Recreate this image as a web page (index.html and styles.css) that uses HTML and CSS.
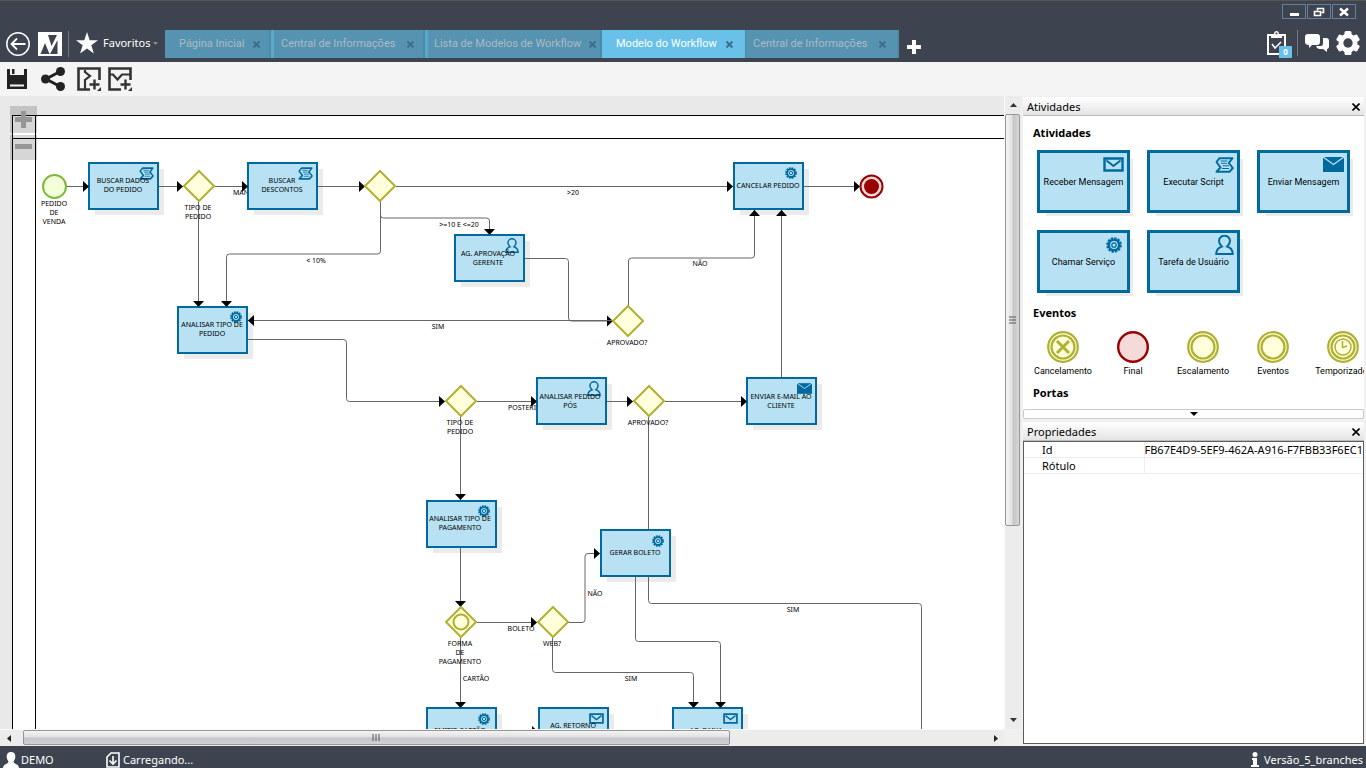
FILE: index.html
```html
<!DOCTYPE html>
<html lang="pt-BR">
<head>
<meta charset="utf-8">
<title>Modelo do Workflow</title>
<link rel="stylesheet" href="styles.css">
</head>
<body>
<svg class="defs" aria-hidden="true">
  <defs>
    <symbol id="i-mail" viewBox="0 0 21 15"><path d="M1.500 1.500h18v12h-18z" fill="none" stroke="#006a9e" stroke-width="2.400"/><path d="M3.500 3.500l7 5.500 7-5.500" fill="none" stroke="#006a9e" stroke-width="2"/></symbol>
    <symbol id="i-mail-full" viewBox="0 0 21 15"><path d="M0 0h21v15H0z" fill="#006a9e"/><path d="M0 0l10.500 7.500L21 0" fill="none" stroke="#b8e2f4" stroke-width="1.300"/></symbol>
    <symbol id="i-script" viewBox="0 0 19 16"><path d="M4.500 1.200H17.500L13.800 6 17.800 11 14.500 14.800H1.500L5.500 10.500 1.500 5z" fill="none" stroke="#006a9e" stroke-width="2" stroke-linejoin="round"/><path d="M5.500 4h7M6 6.300h6M7.500 8.800h6.500M7 11.500h7" stroke="#006a9e" stroke-width="1"/></symbol>
    <symbol id="i-gear" viewBox="0 0 16 16"><circle cx="8" cy="8" r="6.800" fill="none" stroke="#006a9e" stroke-width="2" stroke-dasharray="2.400 1.160"/><circle cx="8" cy="8" r="5.200" fill="none" stroke="#006a9e" stroke-width="2.600"/><circle cx="8" cy="8" r="2.200" fill="none" stroke="#006a9e" stroke-width="1.300"/></symbol>
    <symbol id="i-user" viewBox="0 0 19 21"><path d="M6.800 11.500C4.500 9.500 4 7.500 4 5.800a5.500 5 0 0 1 11 0c0 1.700-.5 3.700-2.800 5.700 3.300 1 5.300 2.500 5.600 7.500H1.200c.3-5 2.300-6.500 5.600-7.500z" fill="none" stroke="#006a9e" stroke-width="2"/></symbol>
    <symbol id="i-event" viewBox="0 0 32 32"><circle cx="16" cy="16" r="14.800" fill="#ffffdb" stroke="#b0b033" stroke-width="2.200"/><circle cx="16" cy="16" r="11.500" fill="#ffffdb" stroke="#b0b033" stroke-width="2.200"/></symbol>
  </defs>
</svg>

<div class="app">
  <header class="top">
    <div class="window-bar">
      <button class="win" aria-label="Minimizar"><svg width="12" height="10"><path d="M2 6h9v3H2z" fill="#fff"/></svg></button>
      <button class="win" aria-label="Restaurar"><svg width="12" height="10"><path d="M4.500 3.500V1.500h6v4H8.500M1.500 4.500h6v4h-6z" fill="none" stroke="#fff" stroke-width="1.600"/></svg></button>
      <button class="win" aria-label="Fechar"><svg width="12" height="10"><path d="M2 1.500l8 7M10 1.500l-8 7" stroke="#fff" stroke-width="2.400"/></svg></button>
    </div>
    <div class="nav">
      <button class="icon-btn" aria-label="Voltar"><svg width="24" height="24"><circle cx="12" cy="12" r="11.200" fill="none" stroke="#fff" stroke-width="1.500"/><path d="M19.500 12H5.500M11 6.500L5.500 12l5.500 5.500" fill="none" stroke="#fff" stroke-width="1.800"/></svg></button>
      <button class="icon-btn logo" aria-label="Início"><svg width="24" height="24"><path d="M0 0h24v24H0z" fill="#fff"/><path d="M2.500 22L7 11l4.500 11zM10 3h9l-5.500 11zM12 22l7.500-14v14z" fill="#3d434f"/></svg></button>
      <span class="rule"></span>
      <button class="fav"><svg width="24" height="24" viewBox="0 0 24 24"><path d="M12 1l2.700 8.200H23l-6.700 5 2.600 8.300L12 17.400l-6.900 5.100 2.600-8.300-6.700-5h8.300z" fill="#fff"/></svg>Favoritos<svg class="caret" width="5" height="3"><path d="M0 0h5L2.500 3z" fill="#8a8d92"/></svg></button>
      <nav class="tabs">
        <button class="tab t1">Página Inicial<svg class="x" width="7" height="7"><path d="M0.500 0.500l6 6M6.500 0.500l-6 6"/></svg></button>
        <button class="tab t2">Central de Informações<svg class="x" width="7" height="7"><path d="M0.500 0.500l6 6M6.500 0.500l-6 6"/></svg></button>
        <button class="tab t3">Lista de Modelos de Workflow<svg class="x" width="7" height="7"><path d="M0.500 0.500l6 6M6.500 0.500l-6 6"/></svg></button>
        <button class="tab t4 active">Modelo do Workflow<svg class="x" width="7" height="7"><path d="M0.500 0.500l6 6M6.500 0.500l-6 6"/></svg></button>
        <button class="tab t2 last">Central de Informações<svg class="x" width="7" height="7"><path d="M0.500 0.500l6 6M6.500 0.500l-6 6"/></svg></button>
      </nav>
      <button class="icon-btn plus" aria-label="Nova aba"><svg width="14" height="14"><path d="M5 0h4v5h5v4H9v5H5V9H0V5h5z" fill="#fff"/></svg></button>
      <div class="tools">
        <button class="icon-btn clip" aria-label="Tarefas"><svg width="19" height="24"><path d="M1 4h17v19H1z" fill="none" stroke="#fff" stroke-width="2"/><path d="M4 3h3c0-4 5-4 5 0h3v4H4z" fill="#fff"/><circle cx="9.500" cy="2.500" r="1" fill="#3d434f"/><path d="M5 13l3 4 6-6" fill="none" stroke="#fff" stroke-width="1.500"/></svg><span class="badge">0</span></button>
        <span class="rule"></span>
        <button class="icon-btn" aria-label="Mensagens"><svg width="24" height="18"><path d="M16 4h5q3 0 3 3v5q0 3-2 3v3l-4-3h-4q-2 0-3-3h5q2 0 2-3V4z" fill="#fff"/><path d="M3 0h9q3 0 3 3v5q0 3-3 3H7l-3 3v-3q-4 0-4-3V3q0-3 3-3z" fill="#fff"/></svg></button>
        <button class="icon-btn" aria-label="Configurações"><svg width="24" height="24" viewBox="-12 -12 24 24"><g fill="#fff"><circle r="9.500"/><g id="tooth"><rect x="-3.500" y="-12" width="7" height="24" rx="1.500"/></g><use href="#tooth" transform="rotate(60)"/><use href="#tooth" transform="rotate(120)"/></g><circle r="4.700" fill="#3d434f"/></svg></button>
      </div>
    </div>
  </header>

  <div class="toolbar">
    <button class="icon-btn save" aria-label="Salvar"><svg width="20" height="20"><path d="M0 0h20v20H0z" fill="#222"/><path d="M3 0h14v6H3z" fill="#f4f4f4"/><path d="M5 0h2.500v5H5z" fill="#222"/><path d="M3 15.500h14v2H3z" fill="#f4f4f4"/></svg></button>
    <button class="icon-btn share" aria-label="Compartilhar"><svg width="24" height="24"><path d="M20 4L5 12l15 8" fill="none" stroke="#222" stroke-width="3"/><g fill="#222"><circle cx="19.500" cy="4.500" r="4.500"/><circle cx="4.500" cy="12" r="4.500"/><circle cx="19.500" cy="19.500" r="4.500"/></g></svg></button>
    <button class="icon-btn pool" aria-label="Adicionar raia vertical"><svg width="24" height="24"><path d="M13 22.500H1.500v-21h21V13" fill="none" stroke="#333" stroke-width="2.600"/><path d="M8 3v2l5 4-5 4v9" fill="none" stroke="#333" stroke-width="2.200"/><path d="M17.500 12.500v10M12.500 17.500h10" stroke="#333" stroke-width="2.400"/><path d="M20 24l4-4v4z" fill="#333"/></svg></button>
    <button class="icon-btn" aria-label="Adicionar raia horizontal"><svg width="24" height="24"><path d="M13 22.500H1.500v-21h21V13" fill="none" stroke="#333" stroke-width="2.600"/><path d="M2 7.500h3l4.500 5 4.500-5h8" fill="none" stroke="#333" stroke-width="2.200"/><path d="M17.500 12.500v10M12.500 17.500h10" stroke="#333" stroke-width="2.400"/><path d="M20 24l4-4v4z" fill="#333"/></svg></button>
  </div>

  <div class="work">
    <main class="editor">
      <div class="canvas">
        <svg class="diagram" width="1600" height="900">
          <defs>
            <marker id="arr" viewBox="0 0 6 12" refX="6" refY="6" markerWidth="6" markerHeight="12" markerUnits="userSpaceOnUse" orient="auto"><path d="M0 0.500L6 6 0 11.500z"/></marker>
            <g id="task"><rect class="shade" x="7" y="7" width="69" height="46"/><rect class="box" x="1" y="1" width="69" height="46"/></g>
            <path id="gate" class="gate" d="M0-15L15 0 0 15-15 0z"/>
          </defs>
          <g transform="translate(0 -96)">
            <rect class="pool-box" x="12.500" y="115.500" width="1700" height="1000"/>
            <path class="pool-box" d="M12.500 138.500H1700M35.500 115.500V1100"/>

            <g class="labels">
              <text x="233" y="195">MANUAL</text>
              <text x="508" y="410">POSTERIOR</text>
            </g>

            <use href="#task" x="88" y="162"/><use href="#task" x="247" y="162"/><use href="#task" x="733" y="162"/>
            <use href="#task" x="454" y="234"/><use href="#task" x="177" y="306"/><use href="#task" x="536" y="377"/>
            <use href="#task" x="746" y="377"/><use href="#task" x="426" y="500"/><use href="#task" x="600" y="529"/>
            <use href="#task" x="426" y="707"/><use href="#task" x="538" y="707"/><use href="#task" x="672" y="707"/>

            <g class="flow">
              <path d="M66 186.500H89"/>
              <path d="M159 186.500H183"/>
              <path d="M215 186.500H248"/>
              <path d="M318 186.500H365"/>
              <path d="M396 186.500H733"/>
              <path d="M804 186.500H860"/>
              <path d="M198.500 202V307"/>
              <path d="M380.500 202V251q0 3-3 3H229.500q-3 0-3 3V307"/>
              <path d="M380.500 202V215q0 3 3 3H486.500q3 0 3 3V235"/>
              <path d="M525 258.500H565.500q3 0 3 3V318q0 3 3 3H613"/>
              <path d="M612 320.500H248"/>
              <path d="M628.500 306V261q0-3 3-3H751.500q3 0 3-3V210"/>
              <path d="M781.500 377V210"/>
              <path d="M248 339.500H343.500q3 0 3 3V398.500q0 3 3 3H445"/>
              <path d="M477 401.500H537"/>
              <path d="M607 401.500H633"/>
              <path d="M665 401.500H747"/>
              <path d="M460.500 417V500"/>
              <path d="M460.500 548V607"/>
              <path d="M460.500 638V708"/>
              <path d="M477 622.500H537"/>
              <path d="M568 622.500H582q3 0 3-3V556.500q0-3 3-3H600"/>
              <path d="M552.500 638V669.500q0 3 3 3H690.500q3 0 3 3V708"/>
              <path d="M635.500 577V638.500q0 3 3 3H717.500q3 0 3 3V708"/>
              <path d="M497 731.500H538"/>
              <path class="open" d="M648.500 417V529M648.500 577V600.500q0 3 3 3H918.500q3 0 3 3V800"/>
            </g>

            <circle class="start" cx="54.500" cy="186.500" r="11.500"/>
            <circle class="end" cx="871.500" cy="186.500" r="11"/><circle class="end-dot" cx="871.500" cy="186.500" r="7.500"/>

            <use href="#gate" x="199" y="186"/><use href="#gate" x="380" y="186"/><use href="#gate" x="628" y="321"/>
            <use href="#gate" x="461" y="401"/><use href="#gate" x="649" y="401"/><use href="#gate" x="461" y="622"/><use href="#gate" x="553" y="622"/>
            <circle class="gate" cx="461" cy="622" r="7.500"/>

            <use href="#i-script" x="139" y="167" width="15" height="13"/>
            <use href="#i-script" x="298" y="167" width="15" height="13"/>
            <use href="#i-gear" x="785" y="167" width="12" height="12"/>
            <use href="#i-user" x="505" y="238" width="14" height="16"/>
            <use href="#i-gear" x="230" y="311" width="12" height="12"/>
            <use href="#i-user" x="587" y="381" width="14" height="16"/>
            <use href="#i-mail-full" x="797" y="383" width="15" height="11"/>
            <use href="#i-gear" x="478" y="505" width="12" height="12"/>
            <use href="#i-gear" x="652" y="535" width="12" height="12"/>
            <use href="#i-gear" x="478" y="713" width="12" height="12"/>
            <use href="#i-mail" x="589" y="713" width="15" height="11"/>
            <use href="#i-mail" x="723" y="713" width="15" height="11"/>

            <g class="labels mid">
              <text x="123" y="183">BUSCAR DADOS</text><text x="123" y="192">DO PEDIDO</text>
              <text x="282" y="183">BUSCAR</text><text x="282" y="192">DESCONTOS</text>
              <text x="768" y="188">CANCELAR PEDIDO</text>
              <text x="488" y="256">AG. APROVAÇÃO</text><text x="488" y="265">GERENTE</text>
              <text x="212" y="327">ANALISAR TIPO DE</text><text x="212" y="336">PEDIDO</text>
              <text x="570" y="399">ANALISAR PEDIDO</text><text x="570" y="408">PÓS</text>
              <text x="781" y="399">ENVIAR E-MAIL AO</text><text x="781" y="408">CLIENTE</text>
              <text x="460" y="521">ANALISAR TIPO DE</text><text x="460" y="530">PAGAMENTO</text>
              <text x="635" y="555">GERAR BOLETO</text>
              <text x="460" y="733">EMITIR CARTÃO</text>
              <text x="573" y="728">AG. RETORNO</text>
              <text x="706" y="733">AG. BAIXA</text>
              <text x="54" y="206">PEDIDO</text><text x="54" y="215">DE</text><text x="54" y="224">VENDA</text>
              <text x="198" y="210">TIPO DE</text><text x="198" y="219">PEDIDO</text>
              <text x="573" y="195">&gt;20</text>
              <text x="459" y="227">&gt;=10 E &lt;=20</text>
              <text x="316" y="263">&lt; 10%</text>
              <text x="438" y="329">SIM</text>
              <text x="627" y="345">APROVADO?</text>
              <text x="700" y="266">NÃO</text>
              <text x="460" y="425">TIPO DE</text><text x="460" y="434">PEDIDO</text>
              <text x="648" y="425">APROVADO?</text>
              <text x="521" y="631">BOLETO</text>
              <text x="595" y="596">NÃO</text>
              <text x="552" y="646">WEB?</text>
              <text x="460" y="646">FORMA</text><text x="460" y="655">DE</text><text x="460" y="664">PAGAMENTO</text>
              <text x="476" y="681">CARTÃO</text>
              <text x="631" y="681">SIM</text>
              <text x="793" y="612">SIM</text>
            </g>
          </g>
        </svg>
        <div class="zoom">
          <button aria-label="Aumentar zoom"><svg width="17" height="17"><path d="M6 0h5v6h6v5h-6v6H6v-6H0V6h6z" fill="#969696"/></svg></button>
          <button aria-label="Diminuir zoom"><svg width="17" height="5"><path d="M0 0h17v5H0z" fill="#969696"/></svg></button>
        </div>
      </div>
      <div class="vscroll">
        <span class="arrow"><svg width="7" height="4"><path d="M0 4l3.500-4L7 4z" fill="#333"/></svg></span>
        <span class="thumb"><svg width="7" height="8"><path d="M0 1h7M0 4h7M0 7h7" stroke="#555"/></svg></span>
        <span class="track"></span>
        <span class="arrow"><svg width="7" height="4"><path d="M0 0l3.500 4L7 0z" fill="#333"/></svg></span>
      </div>
      <div class="hscroll">
        <span class="arrow"><svg width="4" height="7"><path d="M4 0L0 3.500 4 7z" fill="#222"/></svg></span>
        <span class="thumb"><svg width="8" height="7"><path d="M1 0v7M4 0v7M7 0v7" stroke="#555"/></svg></span>
        <span class="track"></span>
        <span class="arrow"><svg width="4" height="7"><path d="M0 0l4 3.500L0 7z" fill="#222"/></svg></span>
      </div>
    </main>

    <aside class="side">
      <section class="panel palette">
        <div class="panel-head"><h2>Atividades</h2><button aria-label="Fechar Atividades"><svg width="8" height="8"><path d="M0.500 0.500l7 7M7.500 0.500l-7 7" stroke="#000" stroke-width="1.600"/></svg></button></div>
        <div class="palette-body">
          <h3>Atividades</h3>
          <div class="tiles">
            <button class="tile"><svg class="ic" width="21" height="15"><use href="#i-mail"/></svg>Receber Mensagem</button>
            <button class="tile"><svg class="ic" width="19" height="16"><use href="#i-script"/></svg>Executar Script</button>
            <button class="tile"><svg class="ic" width="21" height="15"><use href="#i-mail-full"/></svg>Enviar Mensagem</button>
            <button class="tile"><svg class="ic gear" width="16" height="16"><use href="#i-gear"/></svg>Chamar Serviço</button>
            <button class="tile"><svg class="ic person" width="19" height="21"><use href="#i-user"/></svg>Tarefa de Usuário</button>
          </div>
          <h3>Eventos</h3>
          <div class="events">
            <button class="event"><svg width="32" height="32"><use href="#i-event"/><path d="M10 10l12 12M22 10L10 22" stroke="#b0b033" stroke-width="3"/></svg>Cancelamento</button>
            <button class="event"><svg width="32" height="32"><circle cx="16" cy="16" r="14.800" fill="#f6dada" stroke="#990000" stroke-width="2.400"/></svg>Final</button>
            <button class="event"><svg width="32" height="32"><use href="#i-event"/></svg>Escalamento</button>
            <button class="event"><svg width="32" height="32"><use href="#i-event"/></svg>Eventos</button>
            <button class="event"><svg width="32" height="32"><use href="#i-event"/><circle cx="16" cy="16" r="8" fill="none" stroke="#b0b033" stroke-width="1.500"/><path d="M15.500 10v6.500L20 15" fill="none" stroke="#b0b033" stroke-width="1.500"/></svg>Temporizador</button>
          </div>
          <h3>Portas</h3>
        </div>
        <button class="more" aria-label="Rolar para baixo"><svg width="8" height="4"><path d="M0 0h8L4 4z"/></svg></button>
      </section>
      <section class="panel props">
        <div class="panel-head"><h2>Propriedades</h2><button aria-label="Fechar Propriedades"><svg width="8" height="8"><path d="M0.500 0.500l7 7M7.500 0.500l-7 7" stroke="#000" stroke-width="1.600"/></svg></button></div>
        <div class="props-body">
          <table>
            <tr><th scope="row">Id</th><td>FB67E4D9-5EF9-462A-A916-F7FBB33F6EC1</td></tr>
            <tr><th scope="row">Rótulo</th><td></td></tr>
          </table>
        </div>
      </section>
    </aside>
  </div>

  <footer class="status">
    <span class="st user"><svg width="16" height="16"><path d="M5.500 9.500C2.500 6 3 0 8 0s5.500 6 2.500 9.500c0 2.500 5 2 5.500 6.500H0c.5-4.500 5.500-4 5.500-6.500z" fill="#fff"/></svg>DEMO</span>
    <span class="st load"><svg width="14" height="16"><path d="M1 15V5l4-4h8v14zM7 4v8M3.500 8.500L7 12l3.500-3.500" fill="none" stroke="#fff" stroke-width="1.600"/></svg>Carregando...</span>
    <span class="st ver"><svg width="8" height="15"><circle cx="4" cy="2.500" r="2.500" fill="#fff"/><path d="M1 6h5v7h2v2H0v-2h2V8H1z" fill="#fff"/></svg>Versão_5_branches</span>
  </footer>
</div>
</body>
</html>
```
FILE: styles.css
```css
* { box-sizing: border-box; }
body { margin: 0; font-family: "Noto Sans", Tahoma, sans-serif; font-size: 11px; line-height: 16px; color: #000; }
button { border: 0; padding: 0; margin: 0; background: none; font: inherit; color: inherit; }
svg { display: block; flex: none; }
h2, h3 { margin: 0; font-size: 11px; line-height: 16px; }
.defs { position: absolute; width: 0; height: 0; }

.app { display: flex; flex-direction: column; height: 100vh; overflow: hidden; }

/* Header */
.top { background: #3d434f; color: #fff; border-top: 1px solid #555; }
.window-bar { display: flex; justify-content: flex-end; gap: 1px; padding: 3px 10px 0 0; height: 28px; }
.win { width: 24px; height: 15px; border: 1px solid #66809b; display: grid; place-items: center; }
.nav { display: flex; align-items: flex-start; height: 33px; padding: 1px 6px 0; }
.icon-btn { display: block; }
.nav > .icon-btn { margin-top: 2px; }
.nav > .logo { margin-left: 8px; }
.rule { width: 1px; height: 26px; background: #74777c; }
.nav > .rule { margin: 1px 6px 0; }
.fav { display: flex; align-items: center; width: 90px; height: 26px; gap: 4px; }
.caret { margin-left: -1px; }
.tabs { display: flex; background: #5aa9cd; }
.tab { display: flex; justify-content: space-between; align-items: center; height: 28px; padding: 0 9px 0 7px; background: #5693b0; color: #acbac4; white-space: nowrap; border-right: 2px solid #4b8aa8; border-left: 3px solid #5aa9cd; font-family: Roboto, Tahoma, sans-serif; font-size: 11px; }
.t1 { width: 106px; padding-left: 11px; border-left-color: #5693b0; }
.t2 { width: 154px; }
.t3 { width: 177px; padding: 0 4px 0 6px; }
.t4 { width: 143px; padding: 0 10px 0 11px; }
.tab.active { background: #69c1e9; color: #fff; border-color: #69c1e9; }
.last { border-left: 1px solid #4b8aa8; padding-right: 11px; }
.x { stroke: #3c6e88; stroke-width: 2px; }
.nav > .plus { margin: 10px 0 0 8px; }
.tools { display: flex; align-items: center; gap: 7px; margin-left: auto; height: 26px; }
.tools .clip { position: relative; margin-right: 4px; }
.badge { position: absolute; left: 12px; top: 15px; width: 13px; height: 12px; background: #69c1e9; font-size: 8px; line-height: 12px; font-weight: bold; color: #fff; }

.toolbar { display: flex; align-items: center; gap: 7px; height: 34px; padding: 0 7px; background: #f4f4f4; }
.toolbar .share { margin: 0 5px 0 7px; }

/* Work area */
.work { flex: 1; min-height: 0; display: grid; grid-template-columns: minmax(0, 1fr) 345px; background: #f0f0f0; }
.editor { display: grid; grid-template-columns: minmax(0, 1fr) 17px; grid-template-rows: minmax(0, 1fr) 17px; min-height: 0; }
.canvas { position: relative; overflow: hidden; background: #e9e9e9; }
.zoom { position: absolute; left: 10px; top: 10px; width: 27px; display: grid; gap: 2px; }
.zoom button { height: 27px; display: grid; place-items: center; background: rgba(0, 0, 0, .16); }
.zoom button + button { height: 25px; align-items: start; padding-top: 9px; }

.pool-box { fill: #fff; stroke: #000; }
.flow path { fill: none; stroke: #666; marker-end: url(#arr); }
.flow .open { marker-end: none; }
.shade { fill: #ebebeb; }
.box { fill: #b8e2f4; stroke: #006a9e; stroke-width: 2px; }
.gate { fill: #ffffdb; stroke: #b0b033; stroke-width: 2px; }
.start { fill: #f2ffd9; stroke: #7cb83a; stroke-width: 2px; }
.end { fill: #f6dada; stroke: #990000; stroke-width: 2px; }
.end-dot { fill: #990000; }
.labels { font-size: 7px; }
.mid { text-anchor: middle; }

.vscroll, .hscroll { display: flex; background: #ececec; }
.vscroll { flex-direction: column; border-left: 1px solid #fafafa; }
.hscroll { border-top: 1px solid #fafafa; }
.arrow, .thumb { display: grid; place-items: center; }
.vscroll .arrow { height: 18px; }
.hscroll .arrow { width: 17px; }
.thumb { border: 1px solid #979797; border-radius: 2px; }
.vscroll .thumb { flex: 411; margin: 0 1px 0 0; background: linear-gradient(90deg, #f4f4f4, #e2e2e4 45%, #c6c6ca 55%, #d6d6d8); }
.vscroll .track { flex: 186; }
.hscroll .thumb { flex: 707; margin: 0 0 1px 6px; background: linear-gradient(#f4f4f4, #e2e2e4 45%, #c6c6ca 55%, #d0d0d2); }
.hscroll .track { flex: 258; }

/* Side panels */
.side { display: flex; flex-direction: column; gap: 3px; min-width: 0; padding: 1px 2px 2px; }
.panel { display: flex; flex-direction: column; min-height: 0; }
.panel-head { display: flex; justify-content: space-between; align-items: center; height: 19px; flex: none; padding: 1px 4px 0; background: linear-gradient(#fff, #e4e4e4); border-bottom: 1px solid #bbb; }
.panel-head h2 { font-weight: normal; }
.palette { height: 322px; flex: none; }
.palette-body { flex: 1; min-height: 0; overflow: hidden; padding: 9px 0 0 10px; background: #fff; }
.tiles { display: grid; grid-template-columns: repeat(auto-fill, 93px); gap: 17px; padding: 9px 0 12px 4px; }
.tile { position: relative; height: 63px; border: 3px solid #006a9e; background: #b8e2f4; box-shadow: 6px 6px 0 -3px #ebebeb; font-family: Roboto, Tahoma, sans-serif; font-size: 9px; white-space: nowrap; }
.ic { position: absolute; right: 3px; top: 4px; }
.gear { right: 5px; }
.person { top: 2px; }
.events { display: flex; padding: 10px 0 6px; margin-left: -5px; overflow: hidden; }
.event { flex: 0 0 70px; display: flex; flex-direction: column; align-items: center; font-family: Roboto, Tahoma, sans-serif; font-size: 9px; line-height: 16px; }
.more { height: 10px; flex: none; border: 1px solid #ccc; border-radius: 2px; background: #fff; display: grid; place-items: center; }
.props { flex: 1; }
.props-body { flex: 1; border: 1px solid #5c5c5c; background: #fff; }
table { width: 100%; border-collapse: collapse; table-layout: fixed; }
th, td { padding: 0; height: 15px; font-weight: normal; text-align: left; line-height: 15px; border-bottom: 1px solid #eee; white-space: nowrap; }
th { width: 120px; padding-left: 18px; border-right: 1px solid #eee; }

/* Status bar */
.status { display: flex; align-items: center; height: 22px; flex: none; padding: 5px 3px 0; background: #3d434f; color: #fff; }
.st { display: flex; align-items: center; gap: 3px; }
.user { width: 103px; gap: 2px; }
.ver { margin-left: auto; gap: 5px; }
```
